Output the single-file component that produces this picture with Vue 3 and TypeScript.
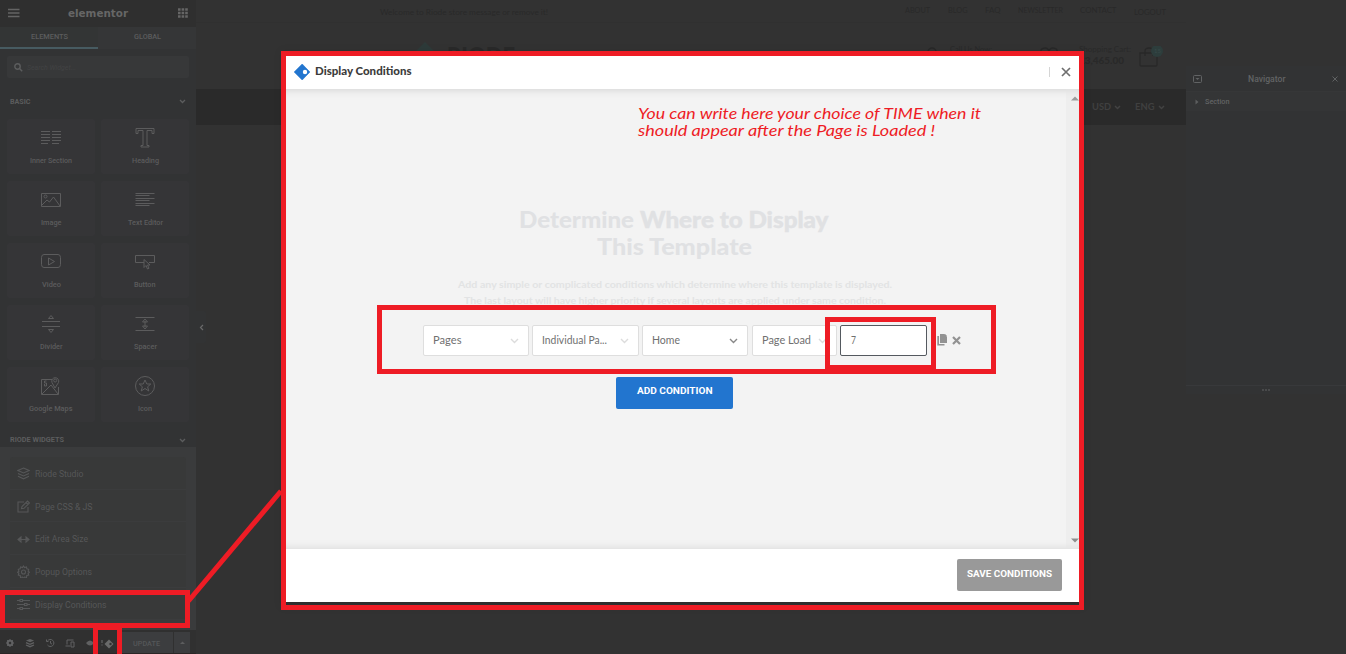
<script setup lang="ts">
import { h } from 'vue'

interface FitProps { t: string; w: number; h?: number }

// A single line of text set to an exact width and centred on its capital height.
const Fit = (p: FitProps) =>
  h('svg', { width: p.w, height: p.h ?? 10, style: 'display:block;overflow:visible;flex:none' }, [
    h('text', { x: 0, y: (p.h ?? 10) / 2, dy: '0.355em', textLength: p.w, lengthAdjust: 'spacingAndGlyphs', fill: 'currentColor' }, p.t),
  ])
Fit.props = ['t', 'w', 'h']

interface Widget { name: string; w: number; d: string }
const widgets: Widget[] = [
  { name: 'Inner Section', w: 42, d: 'M0 3.5h9M0 6.5h9M0 9.5h9M0 12.5h9M0 15.5h7M11 3.5h9M11 6.5h9M11 9.5h9M11 12.5h9M11 15.5h7' },
  { name: 'Heading', w: 27, d: 'M1 .5h18v5h-2v-3h-5v15h2v1.500h-8V17.500h2v-15H3v3H1z' },
  { name: 'Image', w: 20.500, d: 'M.5 3.500h19v13H.5zM1 15l5-5 2.500 2 4-5L19 16M3 6.500a1.500 1.500 0 1 0 3 0a1.500 1.500 0 1 0-3 0' },
  { name: 'Text Editor', w: 35, d: 'M.5 3.500h19M.5 5.500h14M.5 8.500h19M.5 10.500h14M.5 13.500h19M.5 15.500h14' },
  { name: 'Video', w: 19, d: 'M3 2.500h14q2.500 0 2.500 3v7q0 3-2.500 3H3q-2.500 0-2.500-3v-7q0-3 2.500-3zM7.500 6v7l6-3.500z' },
  { name: 'Button', w: 21.500, d: 'M9 10.500H.5v-7h19v7H14M9 7.500v8l2-2 1.500 3.500 1.500-.7-1.500-3.300h2.500z' },
  { name: 'Divider', w: 22.500, d: 'M1 7.500h18M1 12.500h18M7.500 4.500L10 1.500l2.500 3zM7.500 15.500l2.500 3 2.500-3z' },
  { name: 'Spacer', w: 23, d: 'M.5 3.500h19M.5 16.500h19M10 7v6M7.500 8L10 5l2.500 3zM7.500 12l2.500 3 2.500-3z' },
  { name: 'Google Maps', w: 43.500, d: 'M11 3.500H.5v15h17V11M1 18l9-9 7 9M14 12l-3-5.500a3.500 3.500 0 1 1 6.500 0zM12.700 4.500a1.500 1.500 0 1 0 3 0a1.500 1.500 0 1 0-3 0M5.500 5h-2v2h2v3h-2V8' },
  { name: 'Icon', w: 14, d: 'M.5 10a9.500 9.500 0 1 0 19 0a9.500 9.500 0 1 0-19 0M10 4l1.800 4h4l-3.200 2.800 1.200 4.200-3.800-2.500L6.200 15l1.200-4.200L4.200 8h4z' },
]

interface MenuItem { name: string; w: number; d: string }
const menu: MenuItem[] = [
  { name: 'Riode Studio', w: 48.500, d: 'M6.500 1L12 3.500 6.500 6 1 3.500zM1 6.500L6.500 9 12 6.500M1 9.300l5.500 2.500L12 9.300' },
  { name: 'Page CSS & JS', w: 57.500, d: 'M7 2H1v10h10V7M4.500 8.700L5 6.500 10.500 1l2 2L7 8.300zM9 2.500l2 2' },
  { name: 'Edit Area Size', w: 53, d: 'M1 6.500h11M4 4L1 6.500 4 9zM9 4l3 2.500L9 9z' },
  { name: 'Popup Options', w: 57, d: 'M6.500 1l1 1.500 2-.6.3 1.900 1.900.5-.6 1.900 1.400 1-1.400 1 .6 1.900-1.900.4-.3 2-2-.5-1 1.400-1-1.400-2 .5-.3-2-1.900-.4.6-1.900L.5 7.200l1.400-1-.6-1.900 1.900-.5.3-1.900 2 .6zM4.500 7a2 2 0 1 0 4 0a2 2 0 1 0-4 0' },
  { name: 'Display Conditions', w: 71.500, d: 'M0 2.500h3M6 2.500h7M3 1.500h2.500v2H3zM0 6.500h7M10 6.500h3M7.500 5.500H10v2H7.500zM0 10.500h3M6 10.500h7M3 9.500h2.500v2H3z' },
]

interface Select { label: string; w: number; box: string; active?: boolean }
const selects: Select[] = [
  { label: 'Pages', w: 28.500, box: 'a' },
  { label: 'Individual Pa...', w: 65, box: 'b' },
  { label: 'Home', w: 28, box: 'c', active: true },
  { label: 'Page Load', w: 49, box: 'd' },
]
</script>

<template>
  <div class="stage">
    <aside class="sidebar">
      <header class="brand">
        <svg width="12" height="10"><path d="M0 1.500h11.500M0 5h11.500M0 8.500h11.500" stroke="#646464" stroke-width="1.500" /></svg>
        <Fit class="logo" t="elementor" :w="60" />
        <svg width="10" height="10"><path d="M0 1.500h10M0 5h10M0 8.500h10" stroke="#666" stroke-width="2.500" stroke-dasharray="2.600 1" /></svg>
      </header>
      <nav class="tabs">
        <div class="tab on"><Fit t="ELEMENTS" :w="37" /></div>
        <div class="tab"><Fit t="GLOBAL" :w="27" /></div>
      </nav>
      <div class="search">
        <svg width="9" height="9" fill="none" stroke="#5c5d5e" stroke-width="1.400"><circle cx="3.500" cy="3.500" r="2.700" /><path d="M5.500 5.500l2.700 2.700" /></svg>
        <Fit t="Search Widget..." :w="49" />
      </div>
      <div class="section-title">
        <Fit t="BASIC" :w="20.500" />
        <svg width="7" height="5" fill="none" stroke="#5c5d5e" stroke-width="1.300"><path d="M1 1l2.500 2.500L6 1" /></svg>
      </div>
      <div class="widgets">
        <div v-for="x in widgets" :key="x.name" class="widget">
          <svg width="20" height="20" fill="none" stroke="currentColor" stroke-width="1"><path :d="x.d" /></svg>
          <Fit :t="x.name" :w="x.w" />
        </div>
      </div>
      <div class="section-title second">
        <Fit t="RIODE WIDGETS" :w="54" />
        <svg width="7" height="5" fill="none" stroke="#5c5d5e" stroke-width="1.300"><path d="M1 1l2.500 2.500L6 1" /></svg>
      </div>
      <div class="menu-wrap">
        <div class="menu">
          <div v-for="m in menu" :key="m.name" class="item">
            <svg width="13" height="13" fill="none" stroke="currentColor" stroke-width="1.100"><path :d="m.d" /></svg>
            <Fit :t="m.name" :w="m.w" />
          </div>
        </div>
      </div>
      <footer class="tools">
        <svg width="94" height="12" fill="none" stroke="#606162" stroke-width="1.300">
          <circle cx="4" cy="6" r="2.300" stroke-width="2" /><path d="M4 2v8M0 6h8M1.200 3.200l5.600 5.600M6.800 3.200L1.200 8.800" stroke-width="1" /><circle cx="4" cy="6" r="1.200" fill="#303030" stroke="none" />
          <path d="M24 2l4 1.500-4 1.800-4-1.800z" fill="#606162" stroke="none" /><path d="M20 5.700l4 1.700 4-1.700M20 8l4 1.700L28 8" />
          <path d="M41.500 4a3.500 3.500 0 1 1 0 4M40.500 2.500v2h2M44.500 4v2.300l1.500.8" stroke-width="1" />
          <path d="M61 7.500V3h6.500M59.500 9h4.500M65 5h3v5h-3z" stroke-width="1" />
          <path d="M80 6q4-5 8 0q-4 5-8 0z" fill="#606162" stroke="none" />
          <path d="M96 3v3M96 7.500v1" />
        </svg>
        <svg class="gem" width="10" height="10"><path d="M5 .5L9.500 5 5 9.500.5 5z" fill="#696a6a" /><circle cx="6.500" cy="5" r="1.200" fill="#303030" /></svg>
        <div class="update"><Fit t="UPDATE" :w="27" /></div>
        <div class="more"><svg width="5" height="3"><path d="M0 3l2.500-2.500L5 3z" fill="#5c5d5e" /></svg></div>
      </footer>
    </aside>

    <main class="store">
      <div class="topbar">
        <Fit class="welcome" t="Welcome to Riode store message or remove it!" :w="168" />
        <div class="links">
          <Fit t="ABOUT" :w="25" /><Fit t="BLOG" :w="19.500" /><Fit t="FAQ" :w="15.500" />
          <Fit t="NEWSLETTER" :w="45" /><Fit t="CONTACT" :w="36.500" /><Fit class="low" t="LOGOUT" :w="32" />
        </div>
      </div>
      <div class="masthead">
        <svg class="mark" width="136" height="24"><path d="M4 9h16" stroke="#2d2d2d" stroke-width="2" /><path d="M45 0l14 14-14 10-14-10z" fill="#2d3a39" /></svg>
        <Fit class="riode" t="RIODE" :w="68" :h="24" />
        <svg class="phone" width="10" height="14" fill="none" stroke="#282828" stroke-width="1.500"><path d="M1 8V5a4 4 0 0 1 8 0v3" /></svg>
        <Fit class="call" t="Call Us Now:" :w="42" />
        <svg class="heart" width="20" height="14" fill="none" stroke="#282828" stroke-width="1.500"><path d="M10 12L2 6q-1-5 4-5 3 0 4 3 1-3 4-3 5 0 4 5z" /></svg>
        <div class="cart"><Fit t="Shopping Cart:" :w="52" /><Fit class="sum" t="£3,465.00" :w="45" /></div>
        <svg class="bag" width="26" height="24"><path d="M1 7h17v12q0 1-1 1H2q-1 0-1-1zM6 10V5q0-3 4-3t4 3v5" fill="none" stroke="#282828" stroke-width="1.300" /><circle cx="18" cy="5" r="6" fill="#2d3d3c" /></svg>
        <Fit class="count" t="15" :w="7" />
      </div>
      <div class="navbar">
        <Fit t="USD" :w="19" /><svg width="7" height="5" fill="none" stroke="#424242" stroke-width="1.500"><path d="M1 1l2.500 2.500L6 1" /></svg>
        <Fit class="eng" t="ENG" :w="19.500" /><svg width="7" height="5" fill="none" stroke="#424242" stroke-width="1.500"><path d="M1 1l2.500 2.500L6 1" /></svg>
      </div>
      <div class="collapse"><svg width="5" height="7" fill="none" stroke="#6a6a6a" stroke-width="1.200"><path d="M4 1L1.500 3.500 4 6" /></svg></div>
    </main>

    <section class="navigator">
      <header>
        <svg width="10" height="9" fill="none" stroke="#616364"><rect x=".5" y=".5" width="8" height="7" rx="1" /><path d="M2.500 3h4l-2 2z" fill="#616364" stroke="none" /></svg>
        <Fit t="Navigator" :w="37.500" />
        <svg width="6" height="6" stroke="#606263" stroke-width="1"><path d="M.5.5l5 5M5.500.5l-5 5" /></svg>
      </header>
      <div class="row"><svg width="4" height="6"><path d="M.5.5L3.500 3 .5 5.500z" fill="#5c5e5f" /></svg><Fit t="Section" :w="24.500" /></div>
      <div class="fill"></div>
      <div class="grip"><svg width="8" height="2"><path d="M0 1h8" stroke="#606263" stroke-dasharray="2 1" /></svg></div>
    </section>

    <section class="modal">
      <header class="m-head">
        <svg width="18" height="18"><path d="M8.200 1l7.700 8-7.700 8-8-8z" fill="#2275cf" stroke="#2275cf" stroke-linejoin="round" stroke-width=".6" /><circle cx="11" cy="9" r="2.200" fill="#fff" /></svg>
        <Fit class="m-title" t="Display Conditions" :w="96.500" />
        <i class="sep"></i>
        <svg width="10" height="10" stroke="#6f6f6f" stroke-width="1.700"><path d="M1 1l8 8M9 1L1 9" /></svg>
      </header>
      <div class="m-body">
        <div class="content">
          <div class="big"><Fit class="semi" t="Determine" :w="115" :h="27" /><Fit class="bold" t="Where to Display" :w="188.500" :h="27" /></div>
          <div class="big"><Fit class="semi" t="This Template" :w="155" :h="27" /></div>
          <div class="desc">
            <Fit t="Add any simple or complicated conditions which determine where this template is displayed." :w="434" :h="16" />
            <Fit t="The last layout will have higher priority if several layouts are applied under same condition." :w="422" :h="16" />
          </div>
          <div class="controls">
            <div v-for="s in selects" :key="s.label" class="select" :class="[s.box, { active: s.active }]">
              <Fit :t="s.label" :w="s.w" />
              <svg width="9" height="6" fill="none" stroke="currentColor" stroke-width="1.400"><path d="M1 1l3.500 3.500L8 1" /></svg>
            </div>
            <div class="input"><Fit t="7" :w="5" /></div>
            <svg class="copy" width="11" height="12"><path d="M3 0h4.500L10 2.500V9H3z" fill="#929292" /><path d="M2 2H.3v9.500H7.500V10H2zM8 0l2 2H8z" fill="#929292" /></svg>
            <svg class="del" width="9" height="9" stroke="#929292" stroke-width="2.200"><path d="M1 1l7 7M8 1L1 8" /></svg>
          </div>
          <button class="add"><Fit t="ADD CONDITION" :w="75.500" /></button>
        </div>
        <div class="scroll">
          <svg width="8" height="5"><path d="M0 4.500l4-4 4 4z" fill="#9b9b9b" /></svg>
          <svg width="8" height="5"><path d="M0 .5h8l-4 4z" fill="#8d8d8d" /></svg>
        </div>
      </div>
      <footer class="m-foot"><button class="save"><Fit t="SAVE CONDITIONS" :w="85" /></button></footer>
    </section>

    <svg class="marks" width="1346" height="654" fill="none" stroke="#ee1c25" stroke-width="5">
      <rect x="283.500" y="53.500" width="798" height="554" />
      <rect x="379.500" y="307.500" width="614" height="64" />
      <rect x="827.500" y="319.500" width="106" height="48" />
      <rect x="2.500" y="592.500" width="185" height="33" />
      <path d="M95.500 654V627.500H119.500V654M188.500 601L281 491" />
      <g class="note">
        <text x="638" y="118.500" textLength="343" lengthAdjust="spacingAndGlyphs">You can write here your choice of TIME when it</text>
        <text x="638" y="135.500" textLength="297" lengthAdjust="spacingAndGlyphs">should appear after the Page is Loaded !</text>
      </g>
    </svg>
  </div>
</template>

<style>
body { margin: 0; overflow: hidden; background: #323232; }
</style>

<style scoped>
.stage { position: relative; width: 1346px; height: 654px; display: flex; overflow: hidden; background: #323232; font-family: Roboto, "Liberation Sans", sans-serif; }
.stage * { box-sizing: border-box; }
svg { display: block; flex: none; }
button { border: 0; padding: 0; display: flex; align-items: center; justify-content: center; }

.sidebar { width: 196px; height: 654px; background: #323334; color: #5c5d5e; display: flex; flex-direction: column; flex: none; }
.brand { height: 27px; background: #2f2f2f; display: flex; align-items: center; justify-content: space-between; padding: 0 8px 1px; flex: none; }
.logo { font: bold 10px "DejaVu Sans", sans-serif; color: #666; margin-left: -2px; }
.tabs { height: 22px; display: flex; flex: none; font-size: 7.300px; font-weight: 500; }
.tab { width: 98px; display: flex; align-items: center; justify-content: center; background: #353637; padding-bottom: 4px; }
.tab.on { background: #333535; border-bottom: 2px solid #475b61; padding-bottom: 2px; }
.search { margin: 7px 7px 0; height: 22px; background: #373839; border-radius: 2px; display: flex; align-items: center; padding-left: 7px; gap: 4px; font-size: 7.500px; font-style: italic; color: #424344; flex: none; }
.section-title { height: 41px; padding: 6px 10px 0; display: flex; align-items: center; justify-content: space-between; font-size: 7px; font-weight: 700; flex: none; }
.widgets { display: grid; grid-template-columns: 88px 88px; grid-auto-rows: 55px; gap: 7px 6px; padding: 0 7px; flex: none; }
.widget { background: #353537; border-radius: 2px; display: flex; flex-direction: column; align-items: center; padding-top: 9px; gap: 7px; font-size: 7.300px; font-weight: 500; color: #5c5c5d; }
.section-title.second { height: 25px; padding-top: 11px; }
.menu-wrap { height: 183px; background: #3a3b3c; padding: 10px 10px 0; flex: none; }
.menu { background: #383939; border-radius: 3px; }
.item { height: 32.700px; border-bottom: 1px solid #3b3c3d; display: flex; align-items: center; gap: 5.300px; padding: 2px 0 0 7px; font-size: 9.500px; color: #565758; }
.tools { height: 24px; background: #303030; border-bottom: 1px solid #2b2626; display: flex; align-items: center; padding: 2px 0 0 6px; flex: none; font-size: 7.200px; font-weight: 500; }
.tools > svg:first-child { overflow: visible; }
.gem { margin: 2px 0 0 4px; }
.update { width: 52px; height: 21px; margin-left: 7px; background: #3c3d3f; display: flex; align-items: center; justify-content: center; color: #555759; padding-right: 2px; }
.more { width: 16px; height: 21px; margin-left: 1px; background: #3c3d3f; display: flex; align-items: center; justify-content: center; }

.store { position: relative; width: 990px; height: 654px; background: #323232; color: #292929; font-family: Lato, sans-serif; font-size: 8px; flex: none; }
.topbar { height: 23px; border-bottom: 1px solid #303030; display: flex; justify-content: space-between; padding: 7px 20px 0 183.500px; }
.links { display: flex; gap: 17.500px; margin-top: -2px; }
.low { margin-top: 2px; }
.masthead { height: 66px; display: flex; padding-left: 184px; align-items: flex-start; }
.mark { margin: 19px -69px 0 0; }
.riode { font-size: 24px; font-weight: 900; margin-top: 21px; }
.phone { margin: 24px 0 0 412px; }
.call { margin: 21px 0 0 13px; }
.heart { margin: 24px 0 0 47px; }
.cart { margin: 21px 0 0 20px; }
.sum { font-weight: 900; font-size: 9px; margin-top: 2px; }
.bag { margin: 23px 0 0 8px; }
.count { margin: 23px 0 0 -11px; font-size: 6px; color: #374a49; }
.navbar { height: 36px; background: #2a2a2a; display: flex; align-items: center; padding-left: 896px; gap: 3px; color: #404040; font-size: 8.800px; font-weight: 700; }
.eng { margin-left: 10.500px; }
.eng + svg { margin-left: 1px; }
.collapse { position: absolute; left: 0; top: 311px; width: 10px; height: 32px; background: #323334; display: flex; align-items: center; justify-content: center; border-radius: 0 2px 2px 0; }

.navigator { position: absolute; left: 1186px; top: 66px; width: 160px; height: 328px; background: #323334; color: #626465; display: flex; flex-direction: column; }
.navigator header { height: 26px; display: flex; align-items: center; justify-content: space-between; padding: 1px 8px 0 7px; border-bottom: 1px solid #363738; font-size: 8.800px; font-weight: 500; }
.navigator header svg:nth-child(2) { margin-left: -1px; }
.row { height: 19px; background: #343536; display: flex; align-items: center; gap: 5.500px; padding-left: 9px; font-size: 7px; font-weight: 500; }
.fill { height: 274px; }
.grip { height: 9px; border-top: 1px solid #38393b; display: flex; align-items: center; justify-content: center; }

.modal { position: absolute; left: 286px; top: 56px; width: 793px; height: 546px; background: #fff; display: flex; flex-direction: column; font-family: Lato, sans-serif; box-shadow: 0 0 8px 5px rgba(0, 0, 0, .08); }
.m-head { height: 33px; padding: 0 8px 2px; display: flex; align-items: center; flex: none; }
.m-title { font-size: 11px; font-weight: 900; color: #3c3c3c; margin: -1px 0 0 2.500px; }
.sep { width: 1px; height: 10px; background: #d5d5d5; margin-left: auto; margin-right: 11px; }
.m-body { height: 460px; background: #f3f3f3; display: flex; box-shadow: inset 0 8px 8px -7px rgba(0, 0, 0, .13), inset 0 -8px 8px -7px rgba(0, 0, 0, .1); flex: none; }
.content { width: 780px; padding-top: 117px; display: flex; flex-direction: column; align-items: center; }
.big { display: flex; gap: 6px; font-size: 23.500px; color: #e0e1e3; padding-right: 4px; }
.semi { font-weight: 900; }
.bold { font-weight: 900; stroke: currentColor; stroke-width: .4px; }
.desc { margin-top: 16px; display: flex; flex-direction: column; align-items: center; color: #e2e3e4; font-size: 10px; font-weight: 700; padding-right: 3px; }
.controls { margin-top: 17px; padding-left: 137px; align-self: flex-start; height: 31px; display: flex; font-size: 10.500px; color: #707070; }
.select { height: 31px; background: #fff; border: 1px solid #dedede; border-radius: 2px; display: flex; align-items: center; justify-content: space-between; padding: 0 9px 1px 9px; margin-right: 3px; }
.select svg:last-child { color: #dcdcdc; margin-top: 2px; }
.select.active svg:last-child { color: #888; }
.a, .c { width: 106px; }
.b { width: 107px; }
.c { margin-right: 4px; }
.d { width: 85px; }
.input { width: 87px; height: 31px; background: #fff; border: 1px solid #54595f; border-radius: 2px; display: flex; align-items: center; padding: 0 0 1px 10px; }
.copy { margin: 9px 0 0 10px; }
.del { margin: 11px 0 0 4px; }
.add { width: 117px; height: 32px; margin: 21px 0 0 -3px; background: #2275cf; color: #fff; border-radius: 2px; font: 700 9.800px Roboto, sans-serif; padding-bottom: 4px; }
.scroll { width: 13px; background: rgba(230, 230, 230, .35); display: flex; flex-direction: column; justify-content: space-between; align-items: center; padding: 7px 0 6px 4px; }
.m-foot { height: 53px; display: flex; justify-content: flex-end; padding: 10px 17px 0 0; }
.save { width: 105px; height: 32px; background: #999; color: #fff; border-radius: 2px; font: 700 9.800px Roboto, sans-serif; padding-bottom: 2px; }

.marks { position: absolute; left: 0; top: 0; pointer-events: none; }
.note { fill: #ee1c25; stroke: none; font: italic 400 15px "Lucida Handwriting", Lato, cursive; }
</style>
